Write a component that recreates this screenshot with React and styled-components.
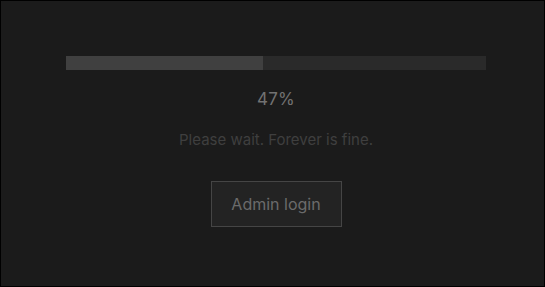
import styled, { createGlobalStyle } from "styled-components";

const Global = createGlobalStyle`
  html, body {
    margin: 0;
    padding: 0;
    background: #000;
  }
  body {
    font-family: Inter, "Noto Sans", sans-serif;
  }
`;

const Screen = styled.div`
  box-sizing: border-box;
  width: 545px;
  height: 287px;
  border: 1px solid #000;
  background: #1b1b1b;
  display: flex;
  flex-direction: column;
  align-items: center;
  padding-top: 55px;
  padding-left: 7px;
`;

const Track = styled.div`
  width: 420px;
  height: 14px;
  background: #2a2a2a;
  display: flex;
`;

const Fill = styled.div`
  height: 100%;
  background: #404040;
`;

const Percent = styled.div`
  margin-top: 18px;
  font-size: 17px;
  line-height: 22px;
  color: #727272;
  letter-spacing: 0.3px;
`;

const Note = styled.div`
  margin-top: 21px;
  font-size: 15px;
  line-height: 18px;
  color: #3f3f3f;
`;

const Button = styled.button`
  margin-top: 32px;
  box-sizing: border-box;
  width: 131px;
  height: 46px;
  background: #232323;
  border: 1px solid #454545;
  color: #6b6b6b;
  font-family: inherit;
  font-size: 16px;
  padding: 0;
  cursor: pointer;
`;

export default function App() {
  const progress = 47;
  return (
    <>
      <Global />
      <Screen>
        <Track>
          <Fill style={{ width: `${progress}%` }} />
        </Track>
        <Percent>{progress}%</Percent>
        <Note>Please wait. Forever is fine.</Note>
        <Button>Admin login</Button>
      </Screen>
    </>
  );
}
